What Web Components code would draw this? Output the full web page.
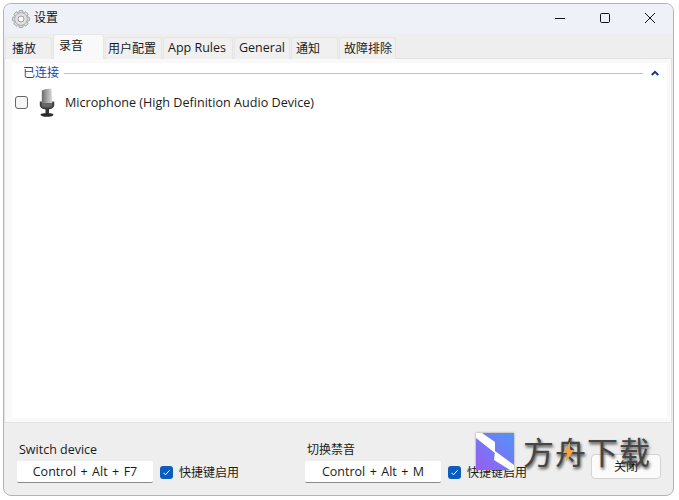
<!DOCTYPE html>
<html lang="zh">
<head>
<meta charset="utf-8">
<title>设置</title>
<style>
html,body{margin:0;padding:0;background:#fff;height:100%;overflow:hidden}
body{font-family:"Open Sans","Noto Sans CJK SC",sans-serif;font-size:12.5px;color:#1a1a1a}
</style>
</head>
<body>
<settings-window>
  <title-bar slot="title">设置</title-bar>
  <tab-strip slot="tabs">
    <tab-item style="width:47px;--pl:6px;--fs:12px">播放</tab-item>
    <tab-item active style="width:51px;--pl:5px;--fs:12px">录音</tab-item>
    <tab-item style="width:57px;--pl:2px;--fs:12px">用户配置</tab-item>
    <tab-item style="width:70px;--pl:4px">App Rules</tab-item>
    <tab-item style="width:56px;--pl:4px">General</tab-item>
    <tab-item style="width:47px;--pl:4px;--fs:12px">通知</tab-item>
    <tab-item style="width:57px;--pl:4px;--fs:12px">故障排除</tab-item>
  </tab-strip>
  <device-panel slot="panel">
    <group-header>已连接</group-header>
    <device-row>Microphone (High Definition Audio Device)</device-row>
  </device-panel>
  <footer-bar slot="footer">
    <hotkey-field label="Switch device" keys="Control + Alt + F7" style="width:288px">快捷键启用</hotkey-field>
    <hotkey-field label="切换禁音" keys="Control + Alt + M" style="width:286px;--lfs:12px">快捷键启用</hotkey-field>
    <push-button>关闭</push-button>
  </footer-bar>
  <water-mark slot="overlay">方舟下载</water-mark>
</settings-window>
<script>
function def(name, html){
  customElements.define(name, class extends HTMLElement{
    constructor(){super();this.attachShadow({mode:'open'}).innerHTML=typeof html==='function'?html(this):html;}
  });
}
const teeth=[0,45,90,135,180,225,270,315].map(a=>`<rect x="7" y=".6" width="4" height="4.4" rx=".8" transform="rotate(${a} 9 9)"/>`).join('');
def('settings-window',`<style>
:host{display:flex;flex-direction:column;position:relative;box-sizing:border-box;width:671px;height:493px;margin:3px 0 0 3px;border:1px solid #b4b4b4;border-radius:8px;background:#eeeeee;overflow:hidden}
</style><slot name="title"></slot><slot name="tabs"></slot><slot name="panel"></slot><slot name="footer"></slot><slot name="overlay"></slot>`);
def('title-bar',`<style>
:host{display:flex;align-items:center;height:30px;background:#eef2f8;flex:none;font-size:12px;color:#111}
.gear{margin-left:8px;margin-right:4px;margin-top:-1px;width:18px;height:18px;flex:none}
.t{flex:1;padding-bottom:4px}
.btn{width:45px;height:30px;display:flex;align-items:center;justify-content:center;flex:none;padding-bottom:2px;box-sizing:border-box}
</style>
<svg class="gear" viewBox="0 0 18 18"><g fill="#e2e2e2" stroke="#8f8f8f" stroke-width=".8">${teeth}<circle cx="9" cy="9" r="6.200"/></g><circle cx="9" cy="9" r="5.800" fill="#e2e2e2"/><circle cx="9" cy="9" r="3" fill="#fcfcfc" stroke="#8f8f8f" stroke-width=".9"/></svg>
<span class="t"><slot></slot></span>
<span class="btn"><svg width="12" height="12" viewBox="0 0 12 12"><path d="M1 6.500h10" stroke="#111" stroke-width="1"/></svg></span>
<span class="btn"><svg width="12" height="12" viewBox="0 0 12 12"><rect x="1.500" y="1.500" width="9" height="9" rx="1.200" fill="none" stroke="#111"/></svg></span>
<span class="btn" style="margin-right:1px"><svg width="12" height="12" viewBox="0 0 12 12"><path d="M1 1l10 10M11 1L1 11" stroke="#111" stroke-width="1"/></svg></span>`);
def('tab-strip',`<style>
:host{display:flex;align-items:flex-end;height:25px;padding-left:1px;flex:none;position:relative;z-index:1;margin-bottom:-1px}
</style><slot></slot>`);
def('tab-item',`<style>
:host{display:flex;align-items:center;box-sizing:border-box;height:22px;margin-right:1px;padding-left:var(--pl,6px);font-size:var(--fs,12.5px);color:#1a1a1a;background:#f0f0f0;border:1px solid #e6e6e6;border-bottom:none;border-radius:3px 3px 0 0;padding-bottom:2px;white-space:nowrap}
:host([active]){height:25px;background:#f9f9f9;padding-bottom:5px;position:relative}
</style><slot></slot>`);
def('device-panel',`<style>
:host{display:block;box-sizing:border-box;height:365px;margin-right:1px;background:#f9f9f9;border:1px solid #e3e3e3;padding:4px 4px 4px 7px;flex:none}
.in{background:#fff;height:100%;padding-top:1px;box-sizing:border-box}
</style><div class="in"><slot></slot></div>`);
def('group-header',`<style>
:host{display:flex;align-items:center;height:20px;margin-top:-1px;color:#1546a8;font-size:12px;padding-left:11px}
.x{padding-bottom:2px}
.line{flex:1;height:1px;background:#b6c0d8;margin:1px 0 0 5px}
svg{margin:0 8px 0 8px}
</style><span class="x"><slot></slot></span><span class="line"></span>
<svg width="8" height="6" viewBox="0 0 8 6"><path d="M.8 5L4 1.800 7.200 5" fill="none" stroke="#123a8c" stroke-width="2"/></svg>`);
def('device-row',`<style>
:host{display:flex;align-items:center;height:32px;margin-top:3px;padding-left:4px;font-size:12.6px;color:#1a1a1a}
.box{box-sizing:border-box;width:13px;height:13px;border:1px solid #666;border-radius:3px;background:#f5f5f5;flex:none;margin-left:-1px}
svg{margin:0 9px 0 10px;flex:none}
</style><span class="box"></span>
<svg width="18" height="29" viewBox="0 0 18 29"><defs><linearGradient id="m" x1="0" y1="0" x2="1" y2="0"><stop offset="0" stop-color="#6a6a6a"/><stop offset=".55" stop-color="#aaa"/><stop offset="1" stop-color="#dadada"/></linearGradient></defs>
<path d="M3.800 2.400Q8 .2 13.500 .8L14.200 15H3.800z" fill="url(#m)"/>
<path d="M1.800 13.500h2V15h10.400v-1.500h2V18q-1.500 3.500-7.200 3.500T1.800 18z" fill="#3f3f3f"/>
<path d="M3.800 15H14.200v3.500q-5 2-10.400 0z" fill="#666"/>
<rect x="7.500" y="21" width="3.500" height="5" fill="#333"/>
<ellipse cx="9" cy="26.800" rx="6.500" ry="1.900" fill="#2a2a2a"/></svg>
<slot></slot>`);
def('footer-bar',`<style>
:host{display:flex;flex:1;align-items:flex-start;padding:17px 0 0 13px;min-height:0}
</style><slot></slot>`);
def('hotkey-field',el=>`<style>
:host{display:block;flex:none;font-size:12px;color:#1a1a1a}
.l{padding-left:2px;height:20px;line-height:20px;margin-bottom:1px;font-size:var(--lfs,12.5px)}
.r{display:flex;align-items:center}
.k{box-sizing:border-box;width:136px;height:22px;background:#fff;border-bottom:1px solid #8a8a8a;border-radius:2px;text-align:center;line-height:21px;font-size:12.5px;word-spacing:1.200px;flex:none}
.c{width:13px;height:13px;border-radius:3px;background:#0a5dbd;margin:0 6px 0 7px;flex:none;display:flex;align-items:center;justify-content:center}
</style><div class="l">${el.getAttribute('label')}</div>
<div class="r"><span class="k">${el.getAttribute('keys')}</span><span class="c"><svg width="9" height="9" viewBox="0 0 9 9"><path d="M1.500 4.800l2 2 4-4.500" fill="none" stroke="#fff" stroke-width="1"/></svg></span><span><slot></slot></span></div>`);
def('push-button',`<style>
:host{display:flex;align-items:center;justify-content:center;box-sizing:border-box;width:70px;height:25px;margin:14px 0 0 0;background:#fbfbfb;border:1px solid #d4d4d4;border-radius:4px;font-size:12px;color:#1a1a1a;flex:none;padding-bottom:2px}
</style><slot></slot>`);
def('water-mark',`<style>
:host{position:absolute;left:472px;top:428px;display:flex;align-items:center;height:38px;pointer-events:none}
svg.logo{flex:none;filter:drop-shadow(0 0 1px rgba(0,0,0,.4))}
.t{position:relative;margin-left:9px;font-family:"Noto Sans CJK SC",sans-serif;font-size:31px;font-weight:400;line-height:38px;color:#454545;letter-spacing:1px;text-shadow:1px 2px 3px rgba(0,0,0,.7);white-space:nowrap}
svg.bolt{position:absolute;left:39px;top:10px}
</style>
<svg class="logo" width="38" height="37" viewBox="0 0 38 37"><defs><linearGradient id="g" x1="0" y1="1" x2="1" y2="0"><stop offset="0" stop-color="#9a5cf4"/><stop offset="1" stop-color="#4f95f6"/></linearGradient></defs>
<rect width="38" height="37" fill="url(#g)"/>
<path d="M0 0h6l13 9v11L0 5z" fill="#fff"/><path d="M19 18l19 14v5h-4L18 27z" fill="#fff"/></svg>
<span class="t"><slot></slot><svg class="bolt" width="13" height="20" viewBox="0 0 13 20"><path d="M8 0L1 11h4l-1 9 8-12H8z" fill="#f4a044"/></svg></span>`);
</script>
</body>
</html>
